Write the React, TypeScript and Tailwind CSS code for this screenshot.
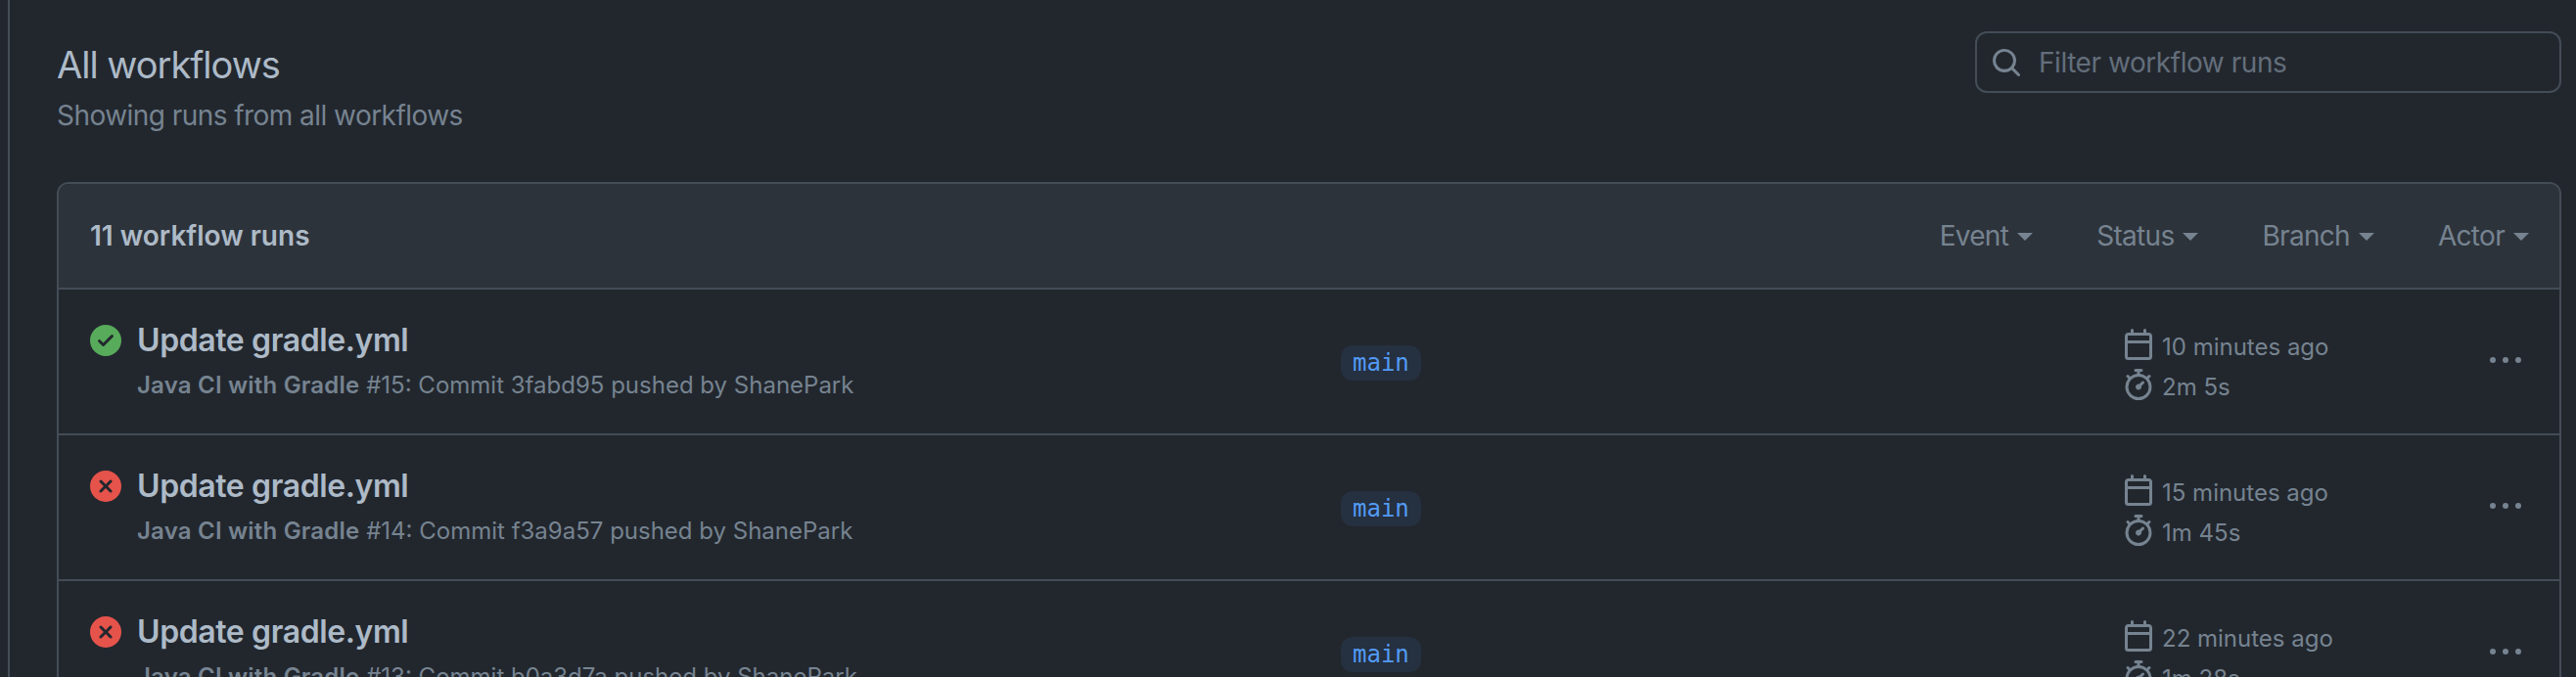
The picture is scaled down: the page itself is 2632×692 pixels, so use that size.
const SEARCH = 'M10.68 11.74a6 6 0 0 1-7.922-8.982 6 6 0 0 1 8.982 7.922l3.04 3.04a.749.749 0 0 1-.326 1.275.749.749 0 0 1-.734-.215ZM11.5 7a4.499 4.499 0 1 0-8.997 0A4.499 4.499 0 0 0 11.5 7Z'
const CHECK = 'M8 16A8 8 0 1 1 8 0a8 8 0 0 1 0 16Zm3.78-9.72a.751.751 0 0 0-.018-1.042.751.751 0 0 0-1.042-.018L6.75 9.19 5.28 7.72a.751.751 0 0 0-1.042.018.751.751 0 0 0-.018 1.042l2 2a.75.75 0 0 0 1.06 0Z'
const CROSS = 'M2.343 13.657A8 8 0 1 1 13.658 2.343 8 8 0 0 1 2.343 13.657ZM6.03 4.97a.751.751 0 0 0-1.042.018.751.751 0 0 0-.018 1.042L6.94 8 4.97 9.97a.749.749 0 0 0 .326 1.275.749.749 0 0 0 .734-.215L8 9.06l1.97 1.97a.749.749 0 0 0 1.275-.326.749.749 0 0 0-.215-.734L9.06 8l1.97-1.97a.749.749 0 0 0-.326-1.275.749.749 0 0 0-.734.215L8 6.94Z'
const CALENDAR = 'M4.75 0a.75.75 0 0 1 .75.75V2h5V.75a.75.75 0 0 1 1.5 0V2h1.25c.966 0 1.75.784 1.75 1.75v10.5A1.75 1.75 0 0 1 13.25 16H2.75A1.75 1.75 0 0 1 1 14.25V3.75C1 2.784 1.784 2 2.75 2H4V.75A.75.75 0 0 1 4.75 0ZM2.5 7.5v6.75c0 .138.112.25.25.25h10.5a.25.25 0 0 0 .25-.25V7.5Zm10.75-4H2.75a.25.25 0 0 0-.25.25V6h11V3.75a.25.25 0 0 0-.25-.25Z'
const STOPWATCH = 'M5.75.75A.75.75 0 0 1 6.5 0h3a.75.75 0 0 1 0 1.5h-.75v1l-.001.041a6.724 6.724 0 0 1 3.464 1.435l.007-.006.75-.75a.751.751 0 0 1 1.042.018.751.751 0 0 1 .018 1.042l-.75.75-.006.007a6.75 6.75 0 1 1-10.548 0L2.72 5.03l-.75-.75a.751.751 0 0 1 .018-1.042.751.751 0 0 1 1.042-.018l.75.75.007.006A6.72 6.72 0 0 1 7.251 2.54l-.001-.04v-1H6.5a.75.75 0 0 1-.75-.75ZM8 14.5a5.25 5.25 0 1 0-.001-10.501A5.25 5.25 0 0 0 8 14.5Zm.389-6.7 1.33-1.33a.75.75 0 1 1 1.061 1.06L9.45 8.861A1.503 1.503 0 0 1 8 10.75a1.499 1.499 0 1 1 .389-2.95Z'
const KEBAB = 'M8 9a1.5 1.5 0 1 0 0-3 1.5 1.5 0 0 0 0 3ZM1.5 9a1.5 1.5 0 1 0 0-3 1.5 1.5 0 0 0 0 3Zm13 0a1.5 1.5 0 1 0 0-3 1.5 1.5 0 0 0 0 3Z'

function Octicon({ d, className = '' }: { d: string; className?: string }) {
  return (
    <svg className={`shrink-0 ${className}`} width={32} height={32} viewBox="0 0 16 16" fill="currentColor">
      <path d={d} />
    </svg>
  )
}

// ─── Filter dropdown label ───────────────────────────────
function Filter({ label }: { label: string }) {
  return (
    <div className="flex items-center gap-[9px]">
      <span className="tracking-[-0.7px]">{label}</span>
      <span className="mt-[2px] h-0 w-0 border-x-[8px] border-t-[8px] border-x-transparent border-t-[#768390]" />
    </div>
  )
}

interface Run {
  ok: boolean
  num: number
  sha: string
  when: string
  took: string
}

const RUNS: Run[] = [
  { ok: true,  num: 15, sha: '3fabd95', when: '10 minutes ago', took: '2m 5s' },
  { ok: false, num: 14, sha: 'f3a9a57', when: '15 minutes ago', took: '1m 45s' },
  { ok: false, num: 13, sha: 'b0a3d7a', when: '22 minutes ago', took: '1m 28s' },
]

// ─── Workflow run row ────────────────────────────────────
function RunRow({ run }: { run: Run }) {
  return (
    <div className="flex h-[149px] shrink-0 items-center border-t-2 border-[#444c56] pl-8">
      <div className="flex h-full w-[1278px] shrink-0 gap-4 pt-[36px]">
        <Octicon d={run.ok ? CHECK : CROSS} className={run.ok ? 'text-[#57ab5a]' : 'text-[#e5534b]'} />
        <div>
          <div className="text-[32px] leading-[32px] font-semibold tracking-[-0.4px] text-[#adbac7]">Update gradle.yml</div>
          <div className="mt-[14px] text-[24px] leading-[32px] text-[#768390]">
            <span className="font-semibold tracking-[0.2px]">Java CI with Gradle</span> #{run.num}: Commit {run.sha} pushed by ShanePark
          </div>
        </div>
      </div>
      <div className="mt-[3px] w-[799px] shrink-0">
        <span className="inline-block h-[36px] rounded-xl bg-[#4184e41a] px-3 font-['DejaVu_Sans_Mono',monospace] text-[24px] leading-[36px] text-[#539bf5]">
          main
        </span>
      </div>
      <div className="mt-[6px] flex w-[375px] shrink-0 flex-col gap-[9px] text-[24px] text-[#768390]">
        <div className="flex h-[32px] items-start gap-2">
          <Octicon d={CALENDAR} />
          <span className="leading-[38px]">{run.when}</span>
        </div>
        <div className="flex h-[32px] items-start gap-2">
          <Octicon d={STOPWATCH} />
          <span className="leading-[38px]">{run.took}</span>
        </div>
      </div>
      <Octicon d={KEBAB} className="mb-[2px] text-[#768390]" />
    </div>
  )
}

export default function App() {
  return (
    <div className="h-[692px] w-[2632px] overflow-hidden bg-[#22272e] pl-[8px] font-['Inter',sans-serif]">
      <div className="h-full border-l-2 border-[#444c56] pr-[15px] pl-[48px]">
        <div className="flex h-[186px] items-start justify-between">
          <div className="pt-[42px]">
            <h1 className="text-[38px] leading-[48px] font-normal tracking-[-1px] text-[#adbac7]">All workflows</h1>
            <p className="mt-[7px] text-[28px] leading-[42px] tracking-[-0.55px] text-[#768390]">Showing runs from all workflows</p>
          </div>
          <div className="mt-[32px] flex h-[63px] w-[599px] items-center gap-[17px] rounded-xl border-2 border-[#444c56] pl-[14px] text-[28px] text-[#636e7b]">
            <Octicon d={SEARCH} className="text-[#768390]" />
            <span className="tracking-[-0.45px]">Filter workflow runs</span>
          </div>
        </div>

        <div className="flex flex-col rounded-t-xl border-x-2 border-t-2 border-[#444c56]">
          <div className="flex h-[106px] items-center justify-between rounded-t-[10px] bg-[#2d333b] pr-[31px] pl-8 text-[28px]">
            <span className="font-semibold text-[#adbac7]">11 workflow runs</span>
            <div className="flex items-center gap-[65px] text-[#768390]">
              <Filter label="Event" />
              <Filter label="Status" />
              <Filter label="Branch" />
              <Filter label="Actor" />
            </div>
          </div>
          {RUNS.map((run) => (
            <RunRow key={run.num} run={run} />
          ))}
        </div>
      </div>
    </div>
  )
}
